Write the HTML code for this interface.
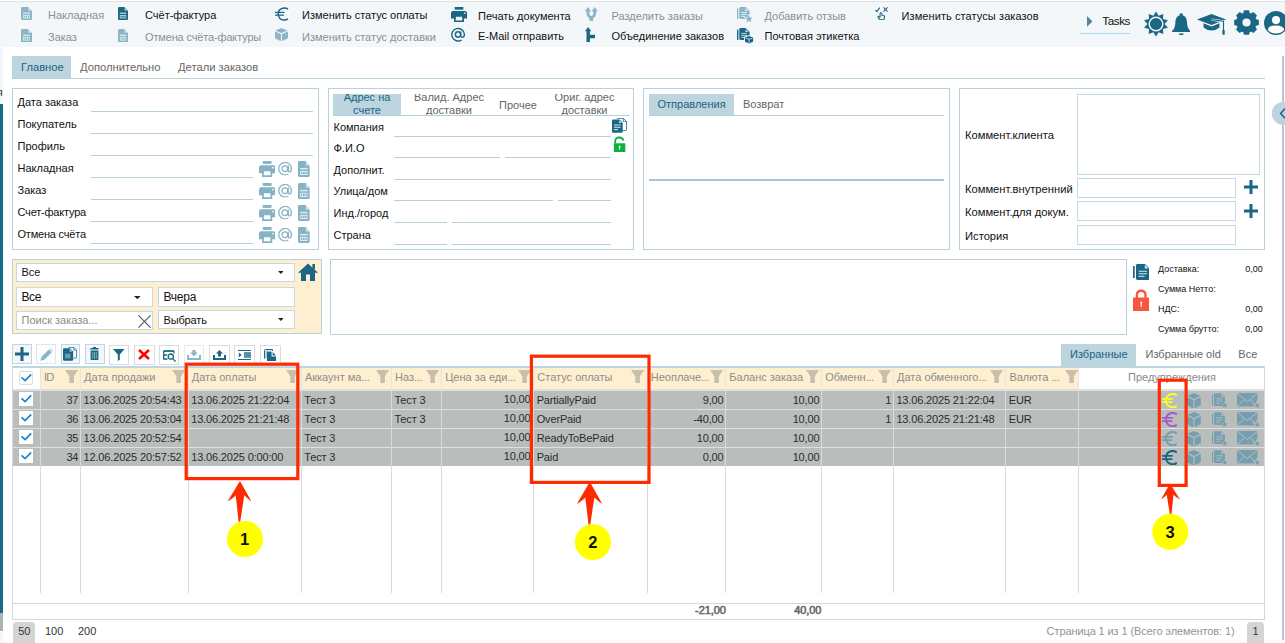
<!DOCTYPE html>
<html lang="ru">
<head>
<meta charset="utf-8">
<title>Заказы</title>
<style>
*{box-sizing:border-box;margin:0;padding:0}
html,body{width:1285px;height:643px;overflow:hidden;background:#fff}
body{position:relative;font-family:"Liberation Sans",sans-serif;font-size:11px;color:#111}
.a{position:absolute}
.t{position:absolute;white-space:nowrap;line-height:14px;height:14px}
.g{color:#8a8f93}
.tb{position:absolute;left:0;top:1px;width:1285px;height:45.5px;background:#f3f7f9;border-top:1px solid #e0e2e2}
.ln{position:absolute;height:1px;background:#b5cfdb}
.box{position:absolute;border:1px solid #b9d1dd;background:#fff}
.inp{position:absolute;border:1px solid #c3d9e4;background:#fff}
.s9{font-size:9px;line-height:12px;height:12px;color:#111}
i{font-style:normal;letter-spacing:-.35px}
.gc{color:#2c2c2c;letter-spacing:-.15px}
.tab{position:absolute;color:#666;text-align:center}
.tabsel{background:#bcd5df;color:#1a6482}
</style>
</head>
<body>
<!-- TOOLBAR -->
<div class="tb"></div>
<div class="a" style="left:0;top:46px;width:2.800px;height:58px;background:#f3f7f9"></div>
<div class="a" style="left:0;top:104px;width:2.800px;height:509.300px;background:#166a88"></div>
<div class="a" style="left:0;top:613.300px;width:2.800px;height:18.200px;background:#a9b4ba"></div>
<div class="a" style="left:0;top:631.500px;width:2.800px;height:12px;background:#f3f7f9"></div>
<!--TB-START-->
<svg width="0" height="0" style="position:absolute">
<defs>
<symbol id="doc" viewBox="0 0 11 13" preserveAspectRatio="none"><path d="M1.2 0H7.2L11 3.8V11.8Q11 13 9.8 13H1.2Q0 13 0 11.8V1.2Q0 0 1.2 0Z" fill="currentColor"/><path d="M7.2 0V3.8H11Z" fill="#fff" fill-opacity=".55"/><rect x="2" y="5.6" width="7" height="1.2" fill="#fff" fill-opacity=".75"/><rect x="2" y="8" width="7" height="3.4" fill="#fff" fill-opacity=".75"/><rect x="2.8" y="8.8" width="1" height="1.8" fill="currentColor"/><rect x="4.6" y="8.8" width="1.6" height="1.8" fill="currentColor"/><rect x="7" y="8.8" width="1.3" height="1.8" fill="currentColor"/></symbol>
<symbol id="euro" viewBox="0 0 14 14"><path d="M13 2.2A6.1 6.1 0 1 0 13 11.8" fill="none" stroke="currentColor" stroke-width="1.5"/><path d="M0 5.3H9.5M0 8.2H9" stroke="currentColor" stroke-width="1.3"/></symbol>
<symbol id="cube" viewBox="0 0 14 14" preserveAspectRatio="none"><path d="M7 0L13.5 2.6L7 5.4L.5 2.6Z" fill="currentColor"/><path d="M0 3.7L6.4 6.4V14L0 11Z" fill="currentColor"/><path d="M14 3.7L7.6 6.4V14L14 11Z" fill="currentColor"/></symbol>
<symbol id="print" viewBox="0 0 16 15" preserveAspectRatio="none"><rect x="3.700" y="0" width="8.600" height="2.700" fill="currentColor"/><path d="M2 4H14Q16 4 16 6V11.400H11.300V9.700H4.700V11.400H0V6Q0 4 2 4Z" fill="currentColor"/><path d="M3 9H4.700V13.400H11.300V9H13V15H3Z" fill="currentColor"/><rect x="12.900" y="5.600" width="1.500" height="1.300" fill="#fff"/></symbol>
<symbol id="at" viewBox="0 0 15 15"><circle cx="7" cy="7.4" r="2.6" fill="none" stroke="currentColor" stroke-width="1.5"/><path d="M9.7 4.6V8.3Q9.8 10.3 11.5 10.2Q13.4 10 13.4 7.2A6.3 6.3 0 1 0 10.6 13" fill="none" stroke="currentColor" stroke-width="1.4"/></symbol>
<symbol id="at2" viewBox="0 0 14.200 13.600"><circle cx="6.900" cy="6.700" r="2.900" fill="none" stroke="currentColor" stroke-width="1.250"/><path d="M10.300 3.600V8.300Q10.400 10 11.700 9.900Q13.400 9.700 13.400 6.700A6.300 6.300 0 1 0 10.400 12.100" fill="none" stroke="currentColor" stroke-width="1.250"/></symbol>
<symbol id="split" viewBox="0 0 12.700 14.500"><path d="M3 0L6.100 4.400H-.1ZM9.700 0L12.800 4.400H6.600Z" fill="currentColor"/><path d="M3 4V6.800C3 8.800 4.200 9.800 6.350 10.800M9.700 4V6.800C9.700 8.800 8.500 9.800 6.350 10.800" fill="none" stroke="currentColor" stroke-width="2.800"/><path d="M6.350 9.500V14.500" stroke="currentColor" stroke-width="3.600"/></symbol>
<symbol id="merge" viewBox="0 0 10.400 15"><path d="M3.100 0L6.300 4.300H-.1Z" fill="currentColor"/><path d="M3.200 4V15" stroke="currentColor" stroke-width="3.400"/><path d="M3.200 9.500H10.300" stroke="currentColor" stroke-width="3.400"/></symbol>
<symbol id="docs" viewBox="0 0 17 16"><rect x="0" y="1.700" width="1.400" height="10.200" fill="currentColor"/><path d="M3.600 0H8.600L12.600 4V10.600Q12.600 11.900 11.300 11.900H3.600Q2.300 11.900 2.300 10.600V1.300Q2.300 0 3.600 0Z" fill="currentColor"/><path d="M8.500 .9V4.100H11.700Z" fill="#fff" fill-opacity=".75"/><path d="M4.300 5.400H10M4.300 7.400H10M4.300 9.400H8" stroke="#fff" stroke-opacity=".8" stroke-width=".9"/></symbol>
<symbol id="star" viewBox="0 0 10 10"><path d="M5 0L6.4 3.5L10 3.8L7.2 6.2L8.1 9.8L5 7.8L1.9 9.8L2.8 6.2L0 3.8L3.6 3.5Z" fill="currentColor"/></symbol>
<symbol id="hand" viewBox="0 0 14 14"><path d="M.4 3.300L1.900 4.700L4.900 .6" fill="none" stroke="currentColor" stroke-width="1.200"/><path d="M8.800 .5L13 4.700M13 .5L8.800 4.700" fill="none" stroke="currentColor" stroke-width="1.150"/><path d="M5.300 10.600V6.800Q5.300 5.900 6.200 5.900Q7.100 5.900 7.100 6.800V8.600L9.300 9.100Q10 9.300 9.900 10L9.600 12.100Q9.400 13.300 8.300 13.300H5.700Q5 13.300 4.500 12.600L3.100 10.600Q2.800 10.100 3.400 9.800Q3.900 9.600 4.300 10L5.300 11" fill="none" stroke="currentColor" stroke-width="1.050" stroke-linejoin="round"/></symbol>
</defs></svg>
<!-- row1 -->
<svg class="a" style="left:21px;top:7px;color:#8bb6c6" width="11" height="13"><use href="#doc"/></svg>
<div class="t g" style="left:48px;top:8px">Накладная</div>
<svg class="a" style="left:118px;top:7px;color:#1a6785" width="10" height="13"><use href="#doc"/></svg>
<div class="t" style="left:145px;top:8px">Счёт-фактура</div>
<svg class="a" style="left:274.5px;top:6.5px;color:#1a6785" width="14" height="14"><use href="#euro"/></svg>
<div class="t" style="left:302px;top:8px">Изменить статус оплаты</div>
<svg class="a" style="left:451px;top:7px;color:#1a6785" width="16" height="15"><use href="#print"/></svg>
<div class="t" style="left:478px;top:9px">Печать документа</div>
<svg class="a" style="left:585px;top:6.900px;color:#8bb6c6" width="12.700" height="14.500"><use href="#split"/></svg>
<div class="t g" style="left:611.5px;top:9px">Разделить заказы</div>
<svg class="a" style="left:737px;top:7px;color:#8bb6c6" width="17" height="16"><use href="#docs"/></svg>
<svg class="a" style="left:744.200px;top:13.900px;color:#8bb6c6" width="9.800" height="9.200" viewBox="-1 -1 12 12"><path d="M5 0L6.400 3.500L10 3.800L7.200 6.200L8.100 9.800L5 7.800L1.900 9.800L2.800 6.200L0 3.800L3.600 3.500Z" fill="#8bb6c6" stroke="#f3f7f9" stroke-width="1.600" paint-order="stroke"/></svg>
<div class="t g" style="left:764.5px;top:9px">Добавить отзыв</div>
<svg class="a" style="left:875px;top:6.5px;color:#1a6785" width="13.5" height="13.5"><use href="#hand"/></svg>
<div class="t" style="left:901.500px;top:8.500px;letter-spacing:.09px">Изменить статусы заказов</div>
<!-- row2 -->
<svg class="a" style="left:21px;top:28.600px;color:#8bb6c6" width="11" height="13.200"><use href="#doc"/></svg>
<div class="t g" style="left:48px;top:30px">Заказ</div>
<svg class="a" style="left:118px;top:28.600px;color:#8bb6c6" width="10" height="13.200"><use href="#doc"/></svg>
<div class="t g" style="left:145px;top:30px;letter-spacing:-.15px">Отмена счёта-фактуры</div>
<svg class="a" style="left:275px;top:28px;color:#8bb6c6" width="13" height="13.2"><use href="#cube"/></svg>
<div class="t g" style="left:302px;top:30px">Изменить статус доставки</div>
<svg class="a" style="left:451px;top:27px;color:#1a6785" width="15" height="15"><use href="#at"/></svg>
<div class="t" style="left:478px;top:29px">E-Mail отправить</div>
<svg class="a" style="left:585px;top:26.900px;color:#1a6785" width="10.400" height="15"><use href="#merge"/></svg>
<div class="t" style="left:611.5px;top:29px">Объединение заказов</div>
<svg class="a" style="left:737px;top:27.8px;color:#1a6785" width="17" height="16"><use href="#docs"/></svg>
<svg class="a" style="left:744.300px;top:34.700px" width="10.100" height="9.600" viewBox="-1 -1 10.100 9.600"><path d="M4.050 0L8.100 1.500V5.800L4.050 7.600L0 5.800V1.500Z" fill="#1a6785" stroke="#f3f7f9" stroke-width="1.800" paint-order="stroke"/><path d="M.7 2L4.050 3.300L7.400 2M4.050 3.300V7.200" stroke="#f3f7f9" stroke-width=".7" fill="none"/></svg>
<div class="t" style="left:764.5px;top:29px">Почтовая этикетка</div>
<!-- Tasks + right icons -->
<svg class="a" style="left:1086.8px;top:16.3px" width="5.5" height="10.8" viewBox="0 0 5.5 10.8"><path d="M0 0L5.5 5.4L0 10.8Z" fill="#4f88a0"/></svg>
<div class="t" style="left:1102.300px;top:13.500px;font-size:11.700px;letter-spacing:-.45px">Tasks</div>
<div class="a" style="left:1080px;top:33px;width:50px;height:1px;background:#a9dbf3"></div>
<svg class="a" style="left:1142.500px;top:11px" width="26" height="26" viewBox="-13 -13 26 26"><polygon fill="#1a6785" points="0.00,-12.50 2.66,-8.18 7.35,-10.11 6.96,-5.05 11.89,-3.86 8.60,-0.00 11.89,3.86 6.96,5.05 7.35,10.11 2.66,8.18 0.00,12.50 -2.66,8.18 -7.35,10.11 -6.96,5.05 -11.89,3.86 -8.60,0.00 -11.89,-3.86 -6.96,-5.05 -7.35,-10.11 -2.66,-8.18"/><circle r="6.800" fill="none" stroke="#f3f7f9" stroke-width="1.400"/></svg>
<svg class="a" style="left:1172px;top:12.800px" width="18.400" height="22.600" viewBox="0 0 18.400 22.600"><circle cx="9.200" cy="2.100" r="1.900" fill="#1a6785"/><path d="M9.200 2.200C12.800 2.400 14.700 4.600 15 9C15.300 13.800 16 15.600 18.400 18.100V18.900H0V18.100C2.400 15.600 3.100 13.800 3.400 9C3.700 4.600 5.600 2.400 9.200 2.200Z" fill="#1a6785"/><path d="M6.700 20.500H11.700Q11.200 22.500 9.200 22.500Q7.200 22.500 6.700 20.500Z" fill="#1a6785"/></svg>
<svg class="a" style="left:1197px;top:13.5px" width="30" height="21" viewBox="0 0 30 21"><path d="M14.5 0L29 5.4L14.500 11L0 5.400Z" fill="#1a6785"/><path d="M6.500 9.300L14.500 12.400L22.500 9.300V13.500Q19 16.500 14.500 16.500Q10 16.500 6.500 13.500Z" fill="#1a6785"/><path d="M14.500 5.600L26.500 7.300V17" stroke="#f2f6f8" stroke-width="2.400" fill="none"/><path d="M14.500 5.600L26.500 7.300V17" stroke="#1a6785" stroke-width="1.100" fill="none"/><rect x="25.400" y="16" width="2.300" height="4.800" rx=".6" fill="#1a6785"/></svg>
<svg class="a" style="left:1234.300px;top:9.800px" width="25" height="25" viewBox="-12.500 -12.500 25 25"><g fill="#1a6785"><circle r="10.100"/><g id="gt"><path d="M-2.500 -12.300H2.500L3.400 -9H-3.400ZM-2.500 12.300H2.500L3.400 9H-3.400Z"/></g><use href="#gt" transform="rotate(45)"/><use href="#gt" transform="rotate(90)"/><use href="#gt" transform="rotate(135)"/></g><circle r="4.100" fill="#f3f7f9"/></svg>
<svg class="a" style="left:1264px;top:11px" width="21" height="24" viewBox="0 0 21 24"><circle cx="12" cy="12" r="12" fill="#1a6785"/><circle cx="12" cy="9.100" r="4.100" fill="#fff"/><path d="M3.800 19Q4.200 14.400 12 14.400Q19.800 14.400 20.200 19Q17 22.600 12 22.600Q7 22.600 3.800 19Z" fill="#fff"/></svg>
<!--TB-END-->
<div class="a" style="left:0;top:85px;width:2.800px;height:14px;overflow:hidden"><div class="t" style="right:0;top:0;color:#333">я</div></div>
<!-- MAIN TABS -->
<div class="ln" style="left:12px;top:78px;width:1253px"></div>
<div class="a tabsel" style="left:12px;top:56px;width:59px;height:22px"></div>
<div class="t" style="left:21px;top:60px;color:#1a6482;font-size:11.200px">Главное</div>
<div class="t" style="left:80px;top:60px;color:#666;font-size:11.200px">Дополнительно</div>
<div class="t" style="left:178px;top:60px;color:#666;font-size:11.200px">Детали заказов</div>
<!-- PANELS -->
<div class="box" style="left:12px;top:88px;width:307px;height:162px"></div>
<div class="box" style="left:328px;top:88px;width:306px;height:162px"></div>
<div class="box" style="left:643px;top:88px;width:307px;height:162px"></div>
<div class="box" style="left:959px;top:88px;width:306px;height:162px"></div>
<!--P1-START-->
<div class="t" style="left:17.5px;top:94.5px">Дата заказа</div>
<div class="ln" style="left:91px;top:111px;width:222px"></div>
<div class="t" style="left:17.5px;top:116.5px">Покупатель</div>
<div class="ln" style="left:91px;top:133px;width:222px"></div>
<div class="t" style="left:17.5px;top:138.5px">Профиль</div>
<div class="ln" style="left:91px;top:155px;width:222px"></div>
<div class="t" style="left:17.5px;top:160.5px">Накладная</div>
<div class="ln" style="left:91px;top:177px;width:162px"></div>
<svg class="a" style="left:259px;top:161px;color:#85b3c5" width="16.3" height="16"><use href="#print"/></svg>
<svg class="a" style="left:278px;top:162px;color:#85b3c5" width="14.2" height="13.6"><use href="#at2"/></svg>
<svg class="a" style="left:298px;top:161px;color:#85b3c5" width="11.8" height="16"><use href="#doc"/></svg>
<div class="t" style="left:17.5px;top:182.5px">Заказ</div>
<div class="ln" style="left:91px;top:199px;width:162px"></div>
<svg class="a" style="left:259px;top:183px;color:#85b3c5" width="16.3" height="16"><use href="#print"/></svg>
<svg class="a" style="left:278px;top:184px;color:#85b3c5" width="14.2" height="13.6"><use href="#at2"/></svg>
<svg class="a" style="left:298px;top:183px;color:#85b3c5" width="11.8" height="16"><use href="#doc"/></svg>
<div class="t" style="left:17.5px;top:204.5px;letter-spacing:-.2px">Счет-фактура</div>
<div class="ln" style="left:91px;top:221px;width:162px"></div>
<svg class="a" style="left:259px;top:205px;color:#85b3c5" width="16.3" height="16"><use href="#print"/></svg>
<svg class="a" style="left:278px;top:206px;color:#85b3c5" width="14.2" height="13.6"><use href="#at2"/></svg>
<svg class="a" style="left:298px;top:205px;color:#85b3c5" width="11.8" height="16"><use href="#doc"/></svg>
<div class="t" style="left:17.5px;top:226.5px;letter-spacing:-.2px">Отмена счёта</div>
<div class="ln" style="left:91px;top:243px;width:162px"></div>
<svg class="a" style="left:259px;top:227px;color:#85b3c5" width="16.3" height="16"><use href="#print"/></svg>
<svg class="a" style="left:278px;top:228px;color:#85b3c5" width="14.2" height="13.6"><use href="#at2"/></svg>
<svg class="a" style="left:298px;top:227px;color:#85b3c5" width="11.8" height="16"><use href="#doc"/></svg>
<!--P1-END-->
<!--P2-START-->
<div class="a" style="left:333px;top:94px;width:297px;height:21.3px;overflow:hidden">
<div class="a tabsel" style="left:0;top:0;width:68px;height:22px"></div>
<div class="a" style="left:-26px;top:-3.5px;width:120px;text-align:center;line-height:13px;color:#1a6482">Адрес на<br>счете</div>
<div class="a" style="left:56px;top:-3.5px;width:120px;text-align:center;line-height:13px;color:#666">Валид. Адрес<br>доставки</div>
<div class="a" style="left:125px;top:3.5px;width:120px;text-align:center;line-height:14px;color:#666">Прочее</div>
<div class="a" style="left:191.5px;top:-3.5px;width:120px;text-align:center;line-height:13px;color:#666">Ориг. адрес<br>доставки</div>
</div>
<div class="ln" style="left:333px;top:115px;width:296px"></div>
<div class="t" style="left:333.5px;top:120.0px">Компания</div>
<div class="ln" style="left:394px;top:136px;width:217px"></div>
<div class="t" style="left:333.5px;top:141.3px">Ф.И.О</div>
<div class="ln" style="left:394px;top:157px;width:106px"></div>
<div class="ln" style="left:505px;top:157px;width:106px"></div>
<div class="t" style="left:333.5px;top:162.7px">Дополнит.</div>
<div class="ln" style="left:394px;top:179px;width:217px"></div>
<div class="t" style="left:333.5px;top:184.2px">Улица/дом</div>
<div class="ln" style="left:394px;top:200px;width:159px"></div>
<div class="ln" style="left:558px;top:200px;width:53px"></div>
<div class="t" style="left:333.5px;top:206.1px">Инд./город</div>
<div class="ln" style="left:394px;top:222px;width:53px"></div>
<div class="ln" style="left:452px;top:222px;width:159px"></div>
<div class="t" style="left:333.5px;top:227.7px">Страна</div>
<div class="ln" style="left:394px;top:244px;width:53px"></div>
<div class="ln" style="left:452px;top:244px;width:159px"></div>
<svg class="a" style="left:612px;top:118px" width="15" height="15" viewBox="0 0 15 15"><path d="M5 .4H11.400L14.500 3.500V11.600Q14.500 12.500 13.600 12.500H10.500" fill="#fff" stroke="#1a6785" stroke-width=".8"/><path d="M11.400 .400V3.500H14.500" fill="none" stroke="#1a6785" stroke-width=".7"/><path d="M1.200 1.400H7.400L10.700 4.700V13.500Q10.700 14.700 9.500 14.700H1.200Q0 14.700 0 13.500V2.600Q0 1.400 1.200 1.400Z" fill="#1a6785"/><path d="M7 2.300V5.100H9.800Z" fill="#fff" fill-opacity=".8"/><path d="M2 7H8.600M2 9.300H8.600M2 11.600H6" stroke="#fff" stroke-opacity=".85" stroke-width="1"/></svg>
<svg class="a" style="left:613px;top:136px" width="13" height="17" viewBox="0 0 13 17"><path d="M2.200 7.500V5.300Q2.200 1.500 6.300 1.500Q9.800 1.500 10.400 4.600" fill="none" stroke="#0bb040" stroke-width="1.800"/><rect x=".9" y="7.300" width="11.400" height="8.700" fill="#0bb040"/><path d="M6.600 9.300L8 11.200H7.100V13.800H6.100V11.200H5.200Z" fill="#fff"/></svg>
<!--P2-END-->
<!--P3-START-->
<div class="a tabsel" style="left:649px;top:94px;width:85px;height:20.600px"></div>
<div class="t" style="left:657.5px;top:97.200px;color:#1a6482">Отправления</div>
<div class="t" style="left:743px;top:97.200px;color:#666">Возврат</div>
<div class="ln" style="left:649px;top:114.500px;width:295px"></div>
<div class="a" style="left:649px;top:179px;width:295px;height:2px;background:#a9c6d4"></div>
<!--P3-END-->
<!--P4-START-->
<div class="t" style="left:965px;top:128.200px;font-size:11.200px">Коммент.клиента</div>
<div class="t" style="left:965px;top:181.700px;font-size:11.200px">Коммент.внутренний</div>
<div class="t" style="left:965px;top:204.800px;font-size:11.200px">Коммент.для докум.</div>
<div class="t" style="left:965px;top:228.800px;font-size:11.200px">История</div>
<div class="inp" style="left:1077px;top:94px;width:183px;height:81px"></div>
<div class="inp" style="left:1077px;top:178px;width:159px;height:20px"></div>
<div class="inp" style="left:1077px;top:201px;width:159px;height:20px"></div>
<div class="inp" style="left:1077px;top:225px;width:159px;height:20px"></div>
<svg class="a" style="left:1244px;top:180px" width="14" height="14" viewBox="0 0 14 14"><path d="M7 0V14M0 7H14" stroke="#1a6785" stroke-width="3"/></svg>
<svg class="a" style="left:1244px;top:204.300px" width="14" height="14" viewBox="0 0 14 14"><path d="M7 0V14M0 7H14" stroke="#1a6785" stroke-width="3"/></svg>

<div class="a" style="left:1282px;top:55.500px;width:2px;height:584px;background:#b0cad7"></div>
<svg class="a" style="left:1271px;top:101px" width="14" height="25" viewBox="0 0 14 25"><circle cx="12.200" cy="12.400" r="11.400" fill="#bdd4de"/><path d="M14 7.600L9.600 12.400L14 17.200" fill="none" stroke="#1a6785" stroke-width="1.500"/></svg>
<!--P4-END-->
<!--F-START-->
<div class="a" style="left:12px;top:259px;width:310px;height:75px;background:#feefd0;border:1px solid #b9d1dd"></div>
<div class="inp" style="left:16px;top:263px;width:279px;height:19px"></div>
<div class="t" style="left:21.500px;top:264.800px">Все</div>
<svg class="a" style="left:277.500px;top:271px" width="5.600" height="3" viewBox="0 0 5.600 3"><path d="M0 0H5.600L2.800 3Z" fill="#222"/></svg>
<svg class="a" style="left:298px;top:262.500px" width="20" height="18" viewBox="0 0 20 18"><path d="M10 .6L20 9.800H17V18H12V11.500H8V18H3V9.800H0Z" fill="#1a6785"/><rect x="14.400" y="1" width="2.600" height="5" fill="#1a6785"/></svg>
<div class="inp" style="left:16px;top:287px;width:137px;height:19.700px;border-color:#d3dadd"></div>
<div class="t" style="left:21.500px;top:289.800px;font-size:12px;letter-spacing:-.4px">Все</div>
<svg class="a" style="left:134px;top:295.600px" width="6.600" height="3.200" viewBox="0 0 6.600 3.200"><path d="M0 0H6.600L3.300 3.200Z" fill="#222"/></svg>
<div class="inp" style="left:158px;top:287px;width:137px;height:19.700px"></div>
<div class="t" style="left:163.500px;top:289.800px;font-size:12px;letter-spacing:-.25px">Вчера</div>
<div class="inp" style="left:16px;top:311px;width:137px;height:19px"></div>
<div class="t" style="left:21.500px;top:312.700px;color:#8a8a8a">Поиск заказа...</div>
<svg class="a" style="left:137.500px;top:314.500px" width="13" height="13" viewBox="0 0 13 13"><path d="M.4 .4L12.600 12.600M12.600 .4L.4 12.600" stroke="#4a6072" stroke-width="1.200"/></svg>
<div class="inp" style="left:158px;top:310.300px;width:137px;height:18.700px"></div>
<div class="t" style="left:163.500px;top:312.800px;letter-spacing:-.15px">Выбрать</div>
<svg class="a" style="left:277.500px;top:318px" width="5.600" height="3" viewBox="0 0 5.600 3"><path d="M0 0H5.600L2.800 3Z" fill="#222"/></svg>
<div class="box" style="left:330px;top:259px;width:797px;height:76px"></div>
<!--F-END-->
<!--S-START-->
<svg class="a" style="left:1132.800px;top:264px" width="16.400" height="16" viewBox="0 0 16.400 16"><rect x="0" y="2" width="1.700" height="12" fill="#1a6785"/><path d="M4.400 0H12L16.400 4.400V14.600Q16.400 16 15 16H4.400Q3 16 3 14.600V1.400Q3 0 4.400 0Z" fill="#1a6785"/><path d="M11.800 .8V4.600H15.600Z" fill="#fff" fill-opacity=".85"/><path d="M5.600 7.200H14M5.600 9.700H14M5.600 12.200H11.500" stroke="#fff" stroke-opacity=".85" stroke-width="1.100"/></svg>
<svg class="a" style="left:1132.800px;top:288.500px" width="16.400" height="22.500" viewBox="0 0 16.400 22.500"><path d="M3.900 9V6.200Q3.900 1.700 8.200 1.700Q12.500 1.700 12.500 6.200V9" fill="none" stroke="#f9553f" stroke-width="2.400"/><rect x="0" y="8.500" width="16.400" height="13.800" fill="#f9553f"/><circle cx="8.200" cy="13.600" r="1.100" fill="#fff"/><rect x="7.600" y="13.600" width="1.200" height="4.200" fill="#fff"/></svg>
<div class="t s9" style="left:1158px;top:262.800px">Доставка:</div>
<div class="t s9" style="left:1158px;top:282.700px">Сумма Нетто:</div>
<div class="t s9" style="left:1158px;top:302.700px">НДС:</div>
<div class="t s9" style="left:1158px;top:322.600px">Сумма брутто:</div>
<div class="t s9" style="right:22.200px;top:262.800px">0,00</div>
<div class="t s9" style="right:22.200px;top:302.700px">0,00</div>
<div class="t s9" style="right:22.200px;top:322.600px">0,00</div>
<!-- grid tabs -->
<div class="a tabsel" style="left:1061px;top:344px;width:75px;height:22px"></div>
<div class="t" style="left:1070px;top:346.800px;color:#1a6482">Избранные</div>
<div class="t" style="left:1145.500px;top:346.800px;color:#666">Избранные old</div>
<div class="t" style="left:1238.300px;top:346.800px;color:#666">Все</div>
<!--S-END-->
<!--T-START-->
<div class="a" style="left:12px;top:344px;width:20px;height:20px;background:#f3f7f9;border:1px solid #bfd6e0"></div>
<svg class="a" style="left:15px;top:347.200px" width="14" height="14" viewBox="0 0 14 14"><path d="M7 0V14M0 7H14" stroke="#1a6785" stroke-width="3"/></svg>
<div class="a" style="left:36px;top:344px;width:20px;height:20px;background:#fafcfd;border:1px solid #dbe8ee"></div>
<svg class="a" style="left:39.500px;top:347.500px" width="13" height="13" viewBox="0 0 13 13"><path d="M.4 12.800L1.400 8.900L8.900 1.400L11.800 4.300L4.300 11.800Z" fill="#8bb6c6"/><path d="M9.800 .5L12.700 3.400" stroke="#8bb6c6" stroke-width="1"/></svg>
<div class="a" style="left:61px;top:344px;width:19px;height:20px;background:#f3f7f9;border:1px solid #bfd6e0"></div>
<svg class="a" style="left:63.400px;top:347px" width="14" height="14" viewBox="0 0 14 14"><path d="M5.500 .4H10.800L13.600 3.200V10.400Q13.600 11 13 11H10.600" fill="#fff" stroke="#1a6785" stroke-width=".8"/><path d="M10.800 .4V3.200H13.600" fill="none" stroke="#1a6785" stroke-width=".7"/><path d="M1.200 1.200H7L10.200 4.400V12.600Q10.200 13.800 9 13.800H1.200Q0 13.800 0 12.600V2.400Q0 1.200 1.200 1.200Z" fill="#1a6785"/><path d="M6.800 2V4.600H9.400Z" fill="#fff" fill-opacity=".85"/><rect x="2" y="6.600" width="5.600" height="4.800" fill="#fff" fill-opacity=".35"/></svg>
<div class="a" style="left:85px;top:344px;width:20px;height:20px;background:#f3f7f9;border:1px solid #bfd6e0"></div>
<svg class="a" style="left:90.300px;top:347px" width="9" height="13.400" viewBox="0 0 9 13.400"><path d="M3 0H6V.9H8.600V2.400H.4V.9H3Z" fill="#1a6785"/><path d="M.6 3.600H8.400V12.200Q8.400 13.400 7.200 13.400H1.800Q.6 13.400 .6 12.200Z" fill="#1a6785"/><path d="M2.700 5V11.800M4.500 5V11.800M6.300 5V11.800" stroke="#fff" stroke-opacity=".55" stroke-width=".8"/></svg>
<div class="a" style="left:109px;top:345px;width:20px;height:20px;background:#fff;border:1px solid #dcdcdc"></div>
<svg class="a" style="left:113.200px;top:349px" width="11.600" height="12" viewBox="0 0 11.600 12"><path d="M0 0H11.600L6.800 5.600V10.800L4.800 12V5.600Z" fill="#1a6785"/></svg>
<div class="a" style="left:134px;top:345px;width:21px;height:20px;background:#fff;border:1px solid #dcdcdc"></div>
<svg class="a" style="left:137.500px;top:349px" width="12" height="11" viewBox="0 0 12 11"><path d="M1 1L11 10M11 1L1 10" stroke="#ff0000" stroke-width="2.600"/></svg>
<div class="a" style="left:159px;top:345px;width:20px;height:20px;background:#fff;border:1px solid #dcdcdc"></div>
<svg class="a" style="left:163px;top:349.500px" width="13" height="12" viewBox="0 0 13 12"><path d="M.6 1H11" stroke="#1a6785" stroke-width="1.800"/><path d="M.7 1V9H4.500M.7 5H4.200" stroke="#1a6785" stroke-width="1.300" fill="none"/><circle cx="7.800" cy="6.600" r="2.600" fill="none" stroke="#1a6785" stroke-width="1.300"/><path d="M9.700 8.600L12.600 11.600" stroke="#1a6785" stroke-width="1.300"/><path d="M11 1V3.500" stroke="#1a6785" stroke-width="1.200"/></svg>
<div class="a" style="left:184px;top:345px;width:20px;height:20px;background:#fff;border:1px solid #e9e9e9"></div>
<svg class="a" style="left:187px;top:350px" width="14" height="10" viewBox="0 0 14 10"><path d="M1 5V9H13V5" fill="none" stroke="#8bb6c6" stroke-width="2"/><path d="M5.400 0H8.600V2.600H10.800L7 6.400L3.200 2.600H5.400Z" fill="#8bb6c6"/></svg>
<div class="a" style="left:209px;top:345px;width:21px;height:20px;background:#fff;border:1px solid #dcdcdc"></div>
<svg class="a" style="left:213px;top:350px" width="13" height="10" viewBox="0 0 13 10"><path d="M1 5V9H12V5" fill="none" stroke="#1a6785" stroke-width="2"/><path d="M5 6.400H8V3.600H10.100L6.500 0L2.900 3.600H5Z" fill="#1a6785"/></svg>
<div class="a" style="left:234px;top:345px;width:21px;height:20px;background:#fff;border:1px solid #dcdcdc"></div>
<svg class="a" style="left:238px;top:350px" width="13" height="10" viewBox="0 0 13 10"><path d="M0 .5H13M0 9.500H13" stroke="#1a6785" stroke-width="1"/><path d="M.8 2.600L3.600 5L.8 7.400Z" fill="#1a6785"/><rect x="6" y="2.400" width="7" height="5.200" fill="#1a6785" fill-opacity=".55"/><path d="M6 2.900H13M6 5H13M6 7.100H13" stroke="#1a6785" stroke-width=".9"/></svg>
<div class="a" style="left:260px;top:345px;width:21px;height:20px;background:#fff;border:1px solid #dcdcdc"></div>
<svg class="a" style="left:264px;top:349px" width="12" height="12" viewBox="0 0 12 12"><path d="M.5 9.500V1.500Q.5 .5 1.500 .5H8.500V2" fill="none" stroke="#1a6785" stroke-width="1"/><path d="M1.400 1.400H7.500V3H2.800V9.500H1.400Z" fill="#1a6785" fill-opacity=".45"/><path d="M3 3H7.600V7.400H12V12H3Z" fill="#1a6785"/><path d="M8.600 3L12 6.400H8.600Z" fill="#1a6785"/></svg>
<!--T-END-->
<!--G-START-->
<svg width="0" height="0" style="position:absolute"><defs>
<symbol id="fl" viewBox="0 0 13.200 13"><path d="M0 0H13.200L8.900 6.300V13H4.300V6.300Z" fill="currentColor"/></symbol>
<symbol id="chk" viewBox="0 0 14 14"><path d="M2.500 6.300L6.100 9.600L12.200 3.400" fill="none" stroke="#1787c9" stroke-width="1.700"/></symbol>
<symbol id="mail" viewBox="0 0 23.200 15"><rect x="0" y="0" width="20.500" height="13.400" fill="currentColor"/><path d="M0 .2L10.250 8.600L20.500 .2" stroke="#b9bdbc" stroke-width="1" fill="none"/><path d="M0 13.400L7.600 6.600M20.500 13.400L12.900 6.600" stroke="#b9bdbc" stroke-width=".9" fill="none"/><path d="M20.300 8.600L21.250 11L23.700 11.200L21.800 12.800L22.400 15.200L20.300 13.900L18.200 15.200L18.800 12.800L16.900 11.200L19.350 11Z" fill="#b9bdbc" stroke="#b9bdbc" stroke-width="1.400"/><path d="M20.300 9.600L21.100 11.500L23.100 11.650L21.550 12.950L22.050 14.900L20.300 13.850L18.550 14.900L19.050 12.950L17.500 11.650L19.500 11.500Z" fill="currentColor"/></symbol>
<symbol id="docs2" viewBox="0 0 15 15"><rect x="0" y="1.800" width="1.100" height="10.600" fill="currentColor"/><path d="M3.300 .3H9.300L12.900 3.900V11.800Q12.900 13 11.700 13H3.300Q2.100 13 2.100 11.800V1.500Q2.100 .3 3.300 .3Z" fill="currentColor"/><path d="M9.200 1.100V4H12.100Z" fill="#b9bdbc" fill-opacity=".9"/><path d="M4.200 5.800H10.800M4.200 8.100H10.800M4.200 10.400H8.400" stroke="#b9bdbc" stroke-width=".9"/><path d="M12.750 9.600L13.550 11.500L15.550 11.650L14 12.950L14.500 14.900L12.750 13.850L11 14.900L11.500 12.950L9.950 11.650L11.950 11.500Z" fill="currentColor" stroke="#b9bdbc" stroke-width=".9" paint-order="stroke"/></symbol>
<symbol id="euro2" viewBox="0 0 15.400 15.200"><path d="M14.800 2.400A6.700 6.700 0 1 0 14.800 12.800" fill="none" stroke="currentColor" stroke-width="2"/><path d="M0 5.900H10.800M0 9.100H10.300" stroke="currentColor" stroke-width="1.600"/></symbol>
</defs></svg>
<div class="a" style="left:12px;top:366px;width:1253px;height:1.500px;background:#bdd6e1"></div>
<div class="a" style="left:12.500px;top:367.500px;width:1252px;height:22px;background:#fff"></div>
<div class="a" style="left:40.3px;top:367.500px;width:1038.4px;height:22px;background:#feefd0"></div>
<div class="a" style="left:12.500px;top:391px;width:1252px;height:18px;background:#b9bdbc"></div>
<div class="a" style="left:12.500px;top:410px;width:1252px;height:18px;background:#b9bdbc"></div>
<div class="a" style="left:12.500px;top:429px;width:1252px;height:18px;background:#b9bdbc"></div>
<div class="a" style="left:12.500px;top:448px;width:1252px;height:18px;background:#b9bdbc"></div>
<div class="a" style="left:12.500px;top:389px;width:1252px;height:2px;background:#dedfdf"></div>
<div class="a" style="left:12.500px;top:409px;width:1252px;height:1px;background:#dedfdf"></div>
<div class="a" style="left:12.500px;top:428px;width:1252px;height:1px;background:#dedfdf"></div>
<div class="a" style="left:12.500px;top:447px;width:1252px;height:1px;background:#dedfdf"></div>
<div class="a" style="left:12.0px;top:390px;width:1px;height:203px;background:#dadcdc"></div>
<div class="a" style="left:39.8px;top:390px;width:1px;height:203px;background:#dadcdc"></div>
<div class="a" style="left:39.8px;top:367.500px;width:1px;height:22px;background:#e3e6e6"></div>
<div class="a" style="left:79.8px;top:390px;width:1px;height:203px;background:#dadcdc"></div>
<div class="a" style="left:79.8px;top:367.500px;width:1px;height:22px;background:#e3e6e6"></div>
<div class="a" style="left:187.5px;top:390px;width:1px;height:203px;background:#dadcdc"></div>
<div class="a" style="left:187.5px;top:367.500px;width:1px;height:22px;background:#e3e6e6"></div>
<div class="a" style="left:300.6px;top:390px;width:1px;height:203px;background:#dadcdc"></div>
<div class="a" style="left:300.6px;top:367.500px;width:1px;height:22px;background:#e3e6e6"></div>
<div class="a" style="left:390.7px;top:390px;width:1px;height:203px;background:#dadcdc"></div>
<div class="a" style="left:390.7px;top:367.500px;width:1px;height:22px;background:#e3e6e6"></div>
<div class="a" style="left:440.9px;top:390px;width:1px;height:203px;background:#dadcdc"></div>
<div class="a" style="left:440.9px;top:367.500px;width:1px;height:22px;background:#e3e6e6"></div>
<div class="a" style="left:533.0px;top:390px;width:1px;height:203px;background:#dadcdc"></div>
<div class="a" style="left:533.0px;top:367.500px;width:1px;height:22px;background:#e3e6e6"></div>
<div class="a" style="left:646.5px;top:390px;width:1px;height:203px;background:#dadcdc"></div>
<div class="a" style="left:646.5px;top:367.500px;width:1px;height:22px;background:#e3e6e6"></div>
<div class="a" style="left:725.0px;top:390px;width:1px;height:203px;background:#dadcdc"></div>
<div class="a" style="left:725.0px;top:367.500px;width:1px;height:22px;background:#e3e6e6"></div>
<div class="a" style="left:820.9px;top:390px;width:1px;height:203px;background:#dadcdc"></div>
<div class="a" style="left:820.9px;top:367.500px;width:1px;height:22px;background:#e3e6e6"></div>
<div class="a" style="left:892.7px;top:390px;width:1px;height:203px;background:#dadcdc"></div>
<div class="a" style="left:892.7px;top:367.500px;width:1px;height:22px;background:#e3e6e6"></div>
<div class="a" style="left:1005.1px;top:390px;width:1px;height:203px;background:#dadcdc"></div>
<div class="a" style="left:1005.1px;top:367.500px;width:1px;height:22px;background:#e3e6e6"></div>
<div class="a" style="left:1078.2px;top:390px;width:1px;height:203px;background:#dadcdc"></div>
<div class="a" style="left:1078.2px;top:367.500px;width:1px;height:22px;background:#e3e6e6"></div>
<div class="a" style="left:1264.0px;top:390px;width:1px;height:203px;background:#dadcdc"></div>
<div class="a" style="left:12px;top:367px;width:1px;height:253px;background:#d6d8d8"></div>
<div class="a" style="left:1264px;top:367px;width:1px;height:253px;background:#d6d8d8"></div>
<div class="a" style="left:12px;top:603px;width:1253px;height:1px;background:#d6d8d8"></div>
<div class="a" style="left:12px;top:619px;width:1253px;height:1px;background:#d6d8d8"></div>
<div class="t" style="left:44.1px;top:370.400px;color:#8d8d8d"><span style="letter-spacing:-.9px">ID</span></div>
<svg class="a" style="left:64.7px;top:369.800px;color:#c8bfae" width="13.2" height="13" viewBox="0 0 13.2 13"><use href="#fl" width="13.200" height="13"/></svg>
<div class="t" style="left:84.1px;top:370.400px;color:#8d8d8d">Дата продажи</div>
<svg class="a" style="left:172.4px;top:369.800px;color:#c8bfae" width="13.2" height="13" viewBox="0 0 13.2 13"><use href="#fl" width="13.200" height="13"/></svg>
<div class="t" style="left:191.8px;top:370.400px;color:#8d8d8d">Дата оплаты</div>
<svg class="a" style="left:285.5px;top:369.800px;color:#c8bfae" width="13.2" height="13" viewBox="0 0 13.2 13"><use href="#fl" width="13.200" height="13"/></svg>
<div class="t" style="left:304.9px;top:370.400px;color:#8d8d8d">Аккаунт ма<i>...</i></div>
<svg class="a" style="left:375.6px;top:369.800px;color:#c8bfae" width="13.2" height="13" viewBox="0 0 13.2 13"><use href="#fl" width="13.200" height="13"/></svg>
<div class="t" style="left:395.0px;top:370.400px;color:#8d8d8d">Наз<i>...</i></div>
<svg class="a" style="left:425.8px;top:369.800px;color:#c8bfae" width="13.2" height="13" viewBox="0 0 13.2 13"><use href="#fl" width="13.200" height="13"/></svg>
<div class="t" style="left:445.2px;top:370.400px;color:#8d8d8d">Цена за еди<i>...</i></div>
<svg class="a" style="left:517.9px;top:369.800px;color:#c8bfae" width="13.2" height="13" viewBox="0 0 13.2 13"><use href="#fl" width="13.200" height="13"/></svg>
<div class="t" style="left:537.3px;top:370.400px;color:#8d8d8d">Статус оплаты</div>
<svg class="a" style="left:631.4px;top:369.800px;color:#c8bfae" width="13.2" height="13" viewBox="0 0 13.2 13"><use href="#fl" width="13.200" height="13"/></svg>
<div class="t" style="left:650.8px;top:370.400px;color:#8d8d8d">Неоплаче<i>...</i></div>
<svg class="a" style="left:709.9px;top:369.800px;color:#c8bfae" width="13.2" height="13" viewBox="0 0 13.2 13"><use href="#fl" width="13.200" height="13"/></svg>
<div class="t" style="left:729.3px;top:370.400px;color:#8d8d8d">Баланс заказа</div>
<svg class="a" style="left:805.8px;top:369.800px;color:#c8bfae" width="13.2" height="13" viewBox="0 0 13.2 13"><use href="#fl" width="13.200" height="13"/></svg>
<div class="t" style="left:825.2px;top:370.400px;color:#8d8d8d">Обменн<i>...</i></div>
<svg class="a" style="left:877.6px;top:369.800px;color:#c8bfae" width="13.2" height="13" viewBox="0 0 13.2 13"><use href="#fl" width="13.200" height="13"/></svg>
<div class="t" style="left:897.0px;top:370.400px;color:#8d8d8d">Дата обменного<i>...</i></div>
<svg class="a" style="left:990.0px;top:369.800px;color:#c8bfae" width="13.2" height="13" viewBox="0 0 13.2 13"><use href="#fl" width="13.200" height="13"/></svg>
<div class="t" style="left:1009.4px;top:370.400px;color:#8d8d8d">Валюта <i>...</i></div>
<svg class="a" style="left:1065.3px;top:369.800px;color:#c8bfae" width="12.9" height="13" viewBox="0 0 12.9 13"><use href="#fl" width="13.200" height="13"/></svg>
<div class="t" style="left:1128px;top:370.400px;width:88px;text-align:center;color:#8a8a8a">Предупреждения</div>
<div class="a" style="left:19.300px;top:370.500px;width:13.400px;height:14px;background:#fff;border:1px solid #dedede;border-radius:2px"></div>
<svg class="a" style="left:19px;top:370.500px" width="14" height="14"><use href="#chk"/></svg>
<div class="a" style="left:19.400px;top:392.4px;width:13.400px;height:13.800px;background:#fff"></div>
<svg class="a" style="left:19px;top:392.3px" width="14" height="14"><use href="#chk"/></svg>
<div class="t gc" style="right:1206.7px;top:393.0px">37</div>
<div class="t gc" style="left:83.5px;top:393.0px">13.06.2025 20:54:43</div>
<div class="t gc" style="left:191.2px;top:393.0px">13.06.2025 21:22:04</div>
<div class="t gc" style="left:304.3px;top:393.0px">Тест 3</div>
<div class="t gc" style="left:394.4px;top:393.0px">Тест 3</div>
<div class="t gc" style="right:754.5px;top:392.0px">10,00</div>
<div class="t gc" style="left:536.7px;top:393.0px">PartiallyPaid</div>
<div class="t gc" style="right:561.5px;top:393.0px">9,00</div>
<div class="t gc" style="right:465.6px;top:393.0px">10,00</div>
<div class="t gc" style="right:393.8px;top:393.0px">1</div>
<div class="t gc" style="left:896.4px;top:393.0px">13.06.2025 21:22:04</div>
<div class="t gc" style="left:1008.8px;top:393.0px">EUR</div>
<svg class="a" style="left:1162px;top:393.0px;color:#fbfb28" width="15.400" height="15.200"><use href="#euro2"/></svg>
<svg class="a" style="left:1187.400px;top:392.7px;color:#759fb0" width="13.900" height="15.400"><use href="#cube"/></svg>
<svg class="a" style="left:1211.900px;top:393.2px;color:#759fb0" width="15" height="15"><use href="#docs2"/></svg>
<svg class="a" style="left:1236.800px;top:393.0px;color:#759fb0" width="23.200" height="15"><use href="#mail"/></svg>
<div class="a" style="left:19.400px;top:411.4px;width:13.400px;height:13.800px;background:#fff"></div>
<svg class="a" style="left:19px;top:411.3px" width="14" height="14"><use href="#chk"/></svg>
<div class="t gc" style="right:1206.7px;top:412.0px">36</div>
<div class="t gc" style="left:83.5px;top:412.0px">13.06.2025 20:53:04</div>
<div class="t gc" style="left:191.2px;top:412.0px">13.06.2025 21:21:48</div>
<div class="t gc" style="left:304.3px;top:412.0px">Тест 3</div>
<div class="t gc" style="left:394.4px;top:412.0px">Тест 3</div>
<div class="t gc" style="right:754.5px;top:411.0px">10,00</div>
<div class="t gc" style="left:536.7px;top:412.0px">OverPaid</div>
<div class="t gc" style="right:561.5px;top:412.0px">-40,00</div>
<div class="t gc" style="right:465.6px;top:412.0px">10,00</div>
<div class="t gc" style="right:393.8px;top:412.0px">1</div>
<div class="t gc" style="left:896.4px;top:412.0px">13.06.2025 21:21:48</div>
<div class="t gc" style="left:1008.8px;top:412.0px">EUR</div>
<svg class="a" style="left:1162px;top:412.0px;color:#a35bd0" width="15.400" height="15.200"><use href="#euro2"/></svg>
<svg class="a" style="left:1187.400px;top:411.7px;color:#759fb0" width="13.900" height="15.400"><use href="#cube"/></svg>
<svg class="a" style="left:1211.900px;top:412.2px;color:#759fb0" width="15" height="15"><use href="#docs2"/></svg>
<svg class="a" style="left:1236.800px;top:412.0px;color:#759fb0" width="23.200" height="15"><use href="#mail"/></svg>
<div class="a" style="left:19.400px;top:430.4px;width:13.400px;height:13.800px;background:#fff"></div>
<svg class="a" style="left:19px;top:430.3px" width="14" height="14"><use href="#chk"/></svg>
<div class="t gc" style="right:1206.7px;top:431.0px">35</div>
<div class="t gc" style="left:83.5px;top:431.0px">13.06.2025 20:52:54</div>
<div class="t gc" style="left:304.3px;top:431.0px">Тест 3</div>
<div class="t gc" style="right:754.5px;top:430.0px">10,00</div>
<div class="t gc" style="left:536.7px;top:431.0px">ReadyToBePaid</div>
<div class="t gc" style="right:561.5px;top:431.0px">10,00</div>
<div class="t gc" style="right:465.6px;top:431.0px">10,00</div>
<svg class="a" style="left:1162px;top:431.0px;color:#759fb0" width="15.400" height="15.200"><use href="#euro2"/></svg>
<svg class="a" style="left:1187.400px;top:430.7px;color:#759fb0" width="13.900" height="15.400"><use href="#cube"/></svg>
<svg class="a" style="left:1211.900px;top:431.2px;color:#759fb0" width="15" height="15"><use href="#docs2"/></svg>
<svg class="a" style="left:1236.800px;top:431.0px;color:#759fb0" width="23.200" height="15"><use href="#mail"/></svg>
<div class="a" style="left:19.400px;top:449.4px;width:13.400px;height:13.800px;background:#fff"></div>
<svg class="a" style="left:19px;top:449.3px" width="14" height="14"><use href="#chk"/></svg>
<div class="t gc" style="right:1206.7px;top:450.0px">34</div>
<div class="t gc" style="left:83.5px;top:450.0px">12.06.2025 20:57:52</div>
<div class="t gc" style="left:191.2px;top:450.0px">13.06.2025 0:00:00</div>
<div class="t gc" style="left:304.3px;top:450.0px">Тест 3</div>
<div class="t gc" style="right:754.5px;top:449.0px">10,00</div>
<div class="t gc" style="left:536.7px;top:450.0px">Paid</div>
<div class="t gc" style="right:561.5px;top:450.0px">0,00</div>
<div class="t gc" style="right:465.6px;top:450.0px">10,00</div>
<svg class="a" style="left:1162px;top:450.0px;color:#1a6785" width="15.400" height="15.200"><use href="#euro2"/></svg>
<svg class="a" style="left:1187.400px;top:449.7px;color:#759fb0" width="13.900" height="15.400"><use href="#cube"/></svg>
<svg class="a" style="left:1211.900px;top:450.2px;color:#759fb0" width="15" height="15"><use href="#docs2"/></svg>
<svg class="a" style="left:1236.800px;top:450.0px;color:#759fb0" width="23.200" height="15"><use href="#mail"/></svg>
<!--G-END-->
<!--FT-START-->
<div class="t" style="right:559.300px;top:602.600px;color:#666;font-size:11px;-webkit-text-stroke:.55px #666;letter-spacing:-.1px">-21,00</div>
<div class="t" style="right:463.800px;top:602.600px;color:#666;font-size:11px;-webkit-text-stroke:.55px #666;letter-spacing:-.1px">40,00</div>
<div class="a" style="left:13px;top:622.200px;width:22px;height:24px;background:#d4d4d4;border-radius:3.500px"></div>
<div class="t" style="left:13px;top:623.700px;width:22.500px;text-align:center;color:#333">50</div>
<div class="t" style="left:45px;top:623.700px;color:#333">100</div>
<div class="t" style="left:78px;top:623.700px;color:#333">200</div>
<div class="t" style="right:50.500px;top:623.800px;color:#939393;letter-spacing:-.1px">Страница 1 из 1 (Всего элементов: 1)</div>
<div class="a" style="left:1247.300px;top:622.200px;width:16.500px;height:24px;background:#d4d4d4;border-radius:3.500px"></div>
<div class="t" style="left:1247.300px;top:623.800px;width:16.500px;text-align:center;color:#3a3a3a">1</div>
<!--FT-END-->
<!--A-START-->
<svg class="a" style="left:0;top:0" width="1285" height="643" viewBox="0 0 1285 643">
<g fill="none" stroke="#ff2a00" stroke-width="3.200">
<rect x="186.200" y="364.200" width="111.600" height="114.400"/>
<rect x="531.400" y="356.200" width="117.600" height="126.200"/>
<rect x="1159.300" y="380.200" width="26.800" height="105.200"/>
</g>
<g fill="#ff2a00">
<path d="M240 481 L251.500 501.500 Q246.500 498 244.300 495.300 L240.200 521.800 L238.600 521.800 L235.700 495.300 Q233.500 498 227.500 501.500 Z"/>
<path d="M589.800 481.800 L602.300 504 Q597 500.300 594.300 497.500 L590.200 525.200 L588.600 525.200 L585.300 497.500 Q583 500.300 576.800 504 Z"/>
<path d="M1170 483.400 L1180 499.600 Q1175.500 496.800 1173.500 494.700 L1171.400 515.200 L1170 515.200 L1166.700 494.700 Q1165 496.800 1161 499.600 Z"/>
</g>
<g fill="#ffff00"><circle cx="245" cy="539" r="18"/><circle cx="592.900" cy="542.100" r="18"/><circle cx="1170.200" cy="531.800" r="18"/></g>
<g font-family="Liberation Sans, sans-serif" font-weight="bold" font-size="16.500" fill="#111" text-anchor="middle"><text x="244.700" y="545">1</text><text x="592.900" y="548.100">2</text><text x="1170.200" y="537.800">3</text></g>
</svg>
<!--A-END-->
</body>
</html>
